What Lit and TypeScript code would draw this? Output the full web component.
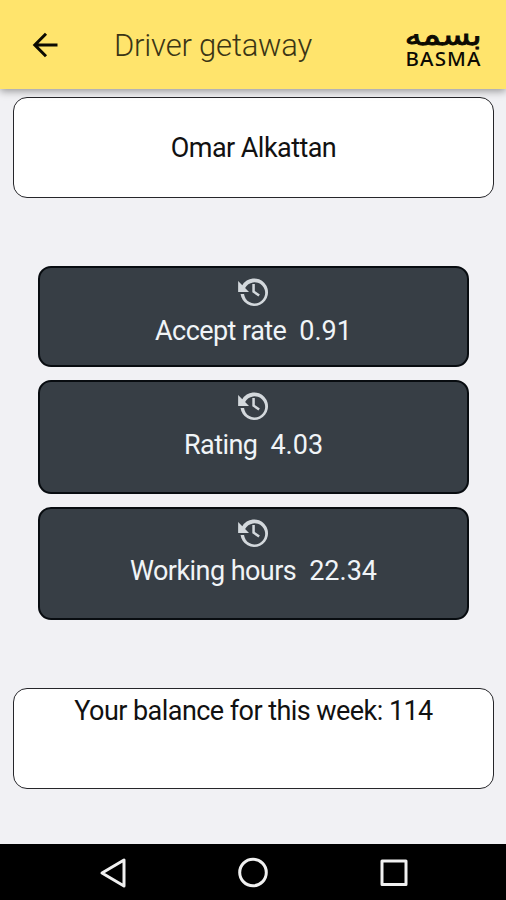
import { LitElement, html, css } from "lit";
import { customElement, property } from "lit/decorators.js";

@customElement("stat-card")
class StatCard extends LitElement {
  @property() label = "";
  @property() value = "";

  static styles = css`
    :host {
      box-sizing: border-box;
      display: flex;
      flex-direction: column;
      align-items: center;
      padding-top: 6px;
      border: 2px solid #080c10;
      border-radius: 13px;
      background: #373e45;
      color: #f0f4f7;
    }
    .icon {
      display: block;
      width: 33px;
      height: 33px;
      margin-right: 3px;
      fill: #d3d8dc;
    }
    .text {
      display: flex;
      gap: 13px;
      line-height: 36px;
      margin-top: 5.5px;
      white-space: nowrap;
    }
    .label {
      letter-spacing: -0.55px;
    }
  `;

  render() {
    return html`
      <svg class="icon" viewBox="0 0 34 34">
        <path d="M2.2 7.2v11.4h11.2l-4-4.100A10.9 10.9 0 1 1 8.3 20.6H4.7A14.2 14.2 0 1 0 6.5 11.6z" />
        <path d="M16.8 10.4h2.6v7l5.2 3.6-1.5 2.2-6.3-4.4z" />
      </svg>
      <div class="text"><span class="label">${this.label}</span><span>${this.value}</span></div>
    `;
  }
}

@customElement("app-root")
class AppRoot extends LitElement {
  static styles = css`
    :host {
      display: flex;
      flex-direction: column;
      height: 900px;
      background: #f1f1f4;
      font: 400 27px Roboto, "Liberation Sans", sans-serif;
      color: #111;
    }
    header {
      position: relative;
      display: flex;
      align-items: center;
      box-sizing: border-box;
      height: 89px;
      padding: 0 24px 0 32px;
      background: #ffe46c;
      box-shadow: 0 2px 8px rgba(0, 0, 0, 0.4);
    }
    .back {
      width: 26px;
      height: 26px;
      fill: none;
      stroke: #0c0a02;
      stroke-width: 3;
    }
    h1 {
      margin: 2px 0 0 56px;
      font-size: 31px;
      font-weight: 300;
      line-height: 40px;
      letter-spacing: -0.2px;
      color: #3b3515;
      white-space: nowrap;
    }
    .logo {
      display: flex;
      flex-direction: column;
      align-items: center;
      width: 78px;
      margin: 2px 0 0 auto;
      color: #0c0a02;
      white-space: nowrap;
    }
    .ar {
      font: 400 29px/25px "DejaVu Sans", sans-serif;
      -webkit-text-stroke: 0.9px #0c0a02;
      transform: scaleX(1.16);
    }
    .en {
      font: 500 20.5px/21px "Noto Sans", "Open Sans", sans-serif;
      letter-spacing: 1.1px;
      margin-right: -1.1px;
    }
    main {
      flex: 1;
      display: flex;
      flex-direction: column;
      padding: 8px 12px 0 13px;
    }
    .card {
      box-sizing: border-box;
      height: 101px;
      border: 1.5px solid #26262a;
      border-radius: 14px;
      background: #fff;
      text-align: center;
      line-height: 36px;
      letter-spacing: -0.55px;
      white-space: nowrap;
    }
    .name {
      padding-top: 32px;
    }
    .balance {
      padding-top: 4px;
    }
    .stats {
      display: flex;
      flex-direction: column;
      gap: 13px;
      margin: 68px 25px 68px 25px;
    }
    .short {
      height: 101px;
    }
    .tall {
      height: 113.5px;
    }
    nav {
      display: flex;
      align-items: center;
      justify-content: space-between;
      box-sizing: border-box;
      height: 56px;
      padding: 2px 96px 0 97px;
      background: #000;
    }
    nav svg {
      width: 32px;
      height: 32px;
      fill: none;
      stroke: #f0f0f0;
      stroke-width: 3;
      stroke-linejoin: round;
    }
  `;

  render() {
    return html`
      <header>
        <svg class="back" viewBox="0 0 26 26">
          <path d="M25.500 13H3M14 1.800L2.800 13L14 24.200" />
        </svg>
        <h1>Driver getaway</h1>
        <div class="logo">
          <span class="ar" lang="ar">بسمه</span>
          <span class="en">BASMA</span>
        </div>
      </header>
      <main>
        <div class="card name">Omar Alkattan</div>
        <div class="stats">
          <stat-card class="short" label="Accept rate" value="0.91"></stat-card>
          <stat-card class="tall" label="Rating" value="4.03"></stat-card>
          <stat-card class="tall" label="Working hours" value="22.34"></stat-card>
        </div>
        <div class="card balance">Your balance for this week: 114</div>
      </main>
      <nav>
        <svg viewBox="0 0 32 32"><path d="M27 3v26L5 16z" /></svg>
        <svg viewBox="0 0 32 32"><circle cx="15" cy="15.5" r="13.3" /></svg>
        <svg viewBox="0 0 32 32"><path d="M4 4h24v23.500H4z" /></svg>
      </nav>
    `;
  }
}
